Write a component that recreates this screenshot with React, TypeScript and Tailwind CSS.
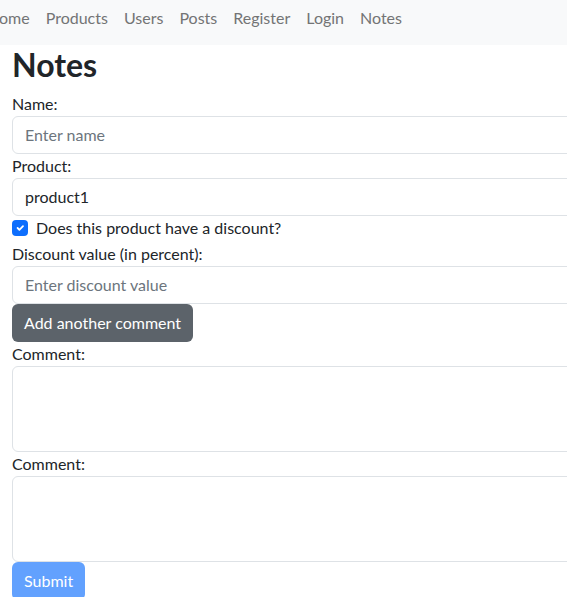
import React from 'react';

const font = { fontFamily: 'Lato, "Noto Sans", sans-serif' };

const navItems = ['Home', 'Products', 'Users', 'Posts', 'Register', 'Login', 'Notes'];

const Label: React.FC<{ children: React.ReactNode }> = ({ children }) => (
    <label className="block text-[16px] leading-[24px] text-[#212529]">{children}</label>
);

const Field: React.FC<{ placeholder?: string; value?: string }> = ({ placeholder, value }) => (
    <div className="w-[620px] h-[38px] border border-[#dee2e6] rounded-[6px] bg-white px-3 flex items-center text-[16px] leading-[24px]">
        {value ? (
            <span className="text-[#212529]">{value}</span>
        ) : (
            <span className="text-[#6c757d]">{placeholder}</span>
        )}
    </div>
);

const Area: React.FC = () => (
    <div className="w-[620px] h-[86px] border border-[#dee2e6] rounded-[6px] bg-white" />
);

export default function App() {
    return (
        <div className="w-[567px] h-[597px] overflow-hidden bg-white text-[#212529]" style={font}>
            <nav className="h-[45px] bg-[#f8f9fa] pt-[6px]">
                <div className="w-[410px] flex justify-end">
                    {navItems.map((item) => (
                        <span key={item} className="shrink-0 px-2 text-[16px] leading-[24px] text-[#737475]">
                            {item}
                        </span>
                    ))}
                </div>
            </nav>

            <div className="px-3">
                <h1 className="text-[32px] leading-[39px] font-bold mb-2">Notes</h1>

                <form className="flex flex-col">
                    <Label>Name:</Label>
                    <Field placeholder="Enter name" />

                    <Label>Product:</Label>
                    <Field value="product1" />

                    <div className="flex items-center gap-[8px] h-[24px] mb-[2px]">
                        <div className="w-4 h-4 rounded-[4px] bg-[#0d6efd] flex items-center justify-center">
                            <svg width="12" height="12" viewBox="0 0 20 20" fill="none">
                                <path d="M6 10l3 3 6-6" stroke="#fff" strokeWidth="3" strokeLinecap="round" strokeLinejoin="round" />
                            </svg>
                        </div>
                        <span className="text-[16px] leading-[24px]">Does this product have a discount?</span>
                    </div>

                    <Label>Discount value (in percent):</Label>
                    <Field placeholder="Enter discount value" />

                    <div>
                        <button type="button" className="h-[38px] px-3 rounded-[6px] bg-[#5c636a] text-white text-[16px] leading-[24px]">
                            Add another comment
                        </button>
                    </div>

                    <Label>Comment:</Label>
                    <Area />

                    <Label>Comment:</Label>
                    <Area />

                    <div>
                        <button type="button" className="h-[38px] px-3 rounded-[6px] bg-[#62a1fe] text-white text-[16px] leading-[24px]">
                            Submit
                        </button>
                    </div>
                </form>
            </div>
        </div>
    );
}
